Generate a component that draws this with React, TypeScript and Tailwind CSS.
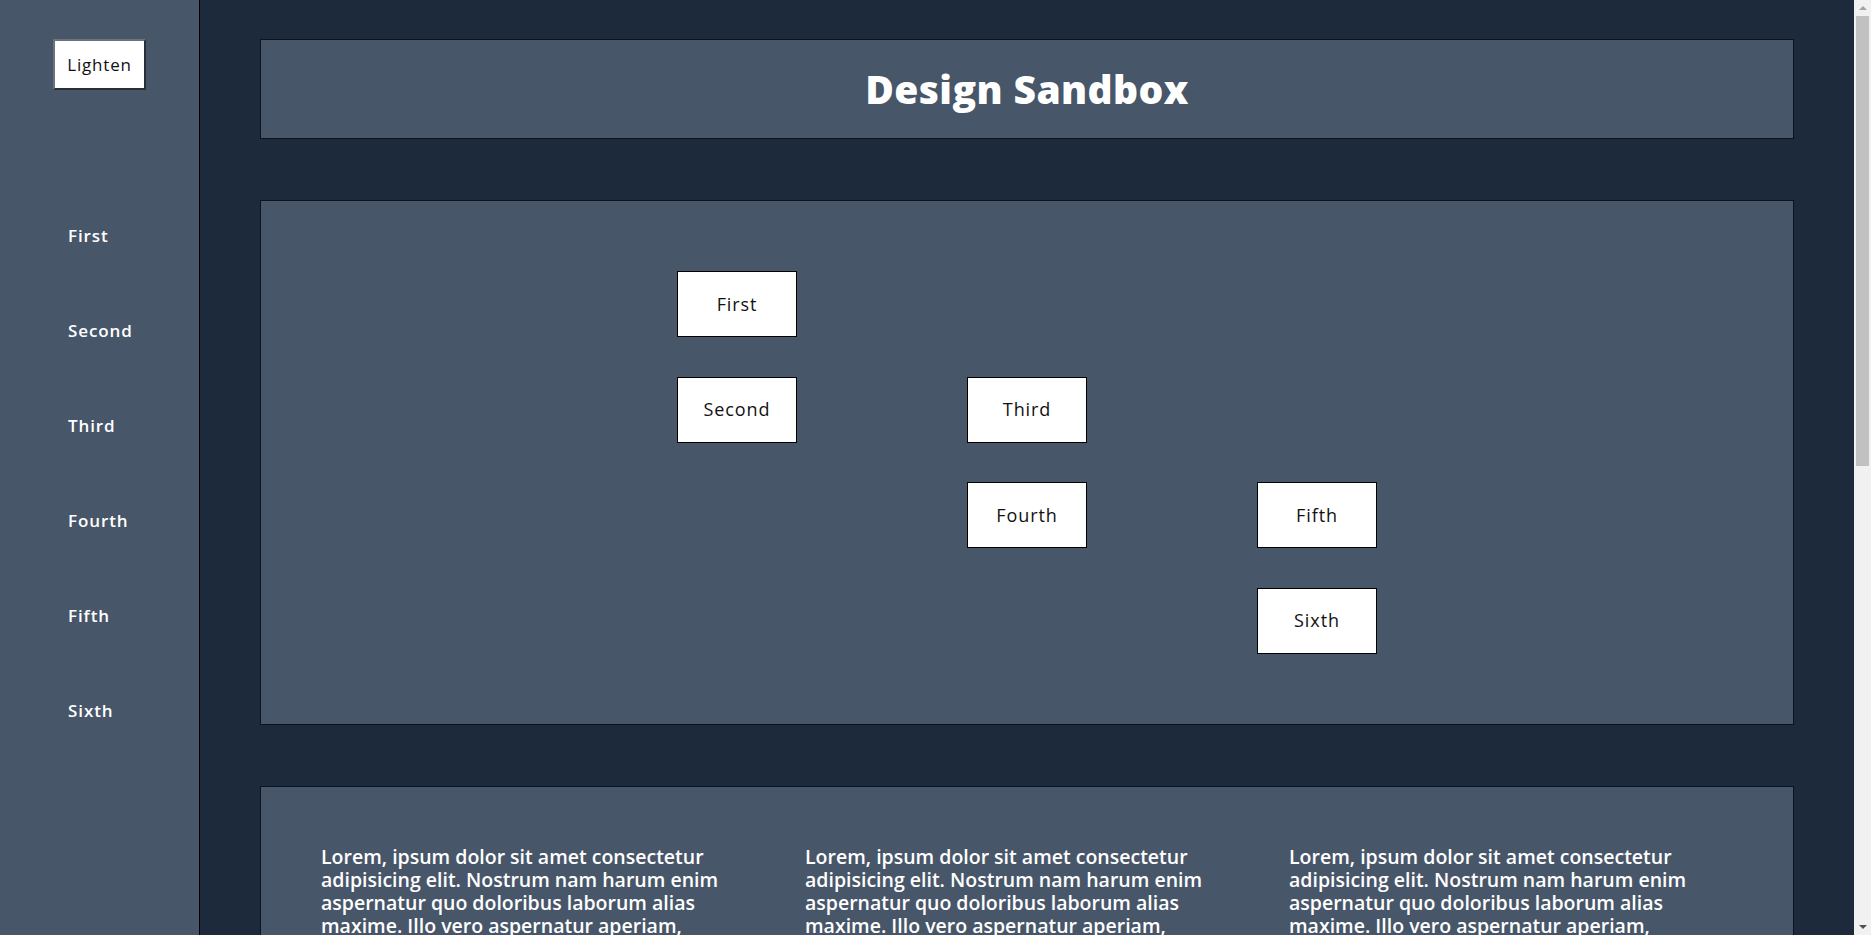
import React from 'react';

const navItems = ['First', 'Second', 'Third', 'Fourth', 'Fifth', 'Sixth'];

const lorem =
  'Lorem, ipsum dolor sit amet consectetur adipisicing elit. Nostrum nam harum enim aspernatur quo doloribus laborum alias maxime. Illo vero aspernatur aperiam, voluptatum quas necessitatibus rerum ex nobis est aut! Quibusdam, perspiciatis.';

const Tile = ({ label, className }: { label: string; className: string }) => (
  <div
    className={`flex items-center justify-center bg-white border border-black text-[18px] tracking-[0.9px] text-[#111] ${className}`}
  >
    {label}
  </div>
);

// stand-in for the browser's vertical scrollbar seen in the screenshot
const Scrollbar = () => (
  <div className="sticky top-0 self-start h-screen w-[17px] shrink-0 bg-[#f1f1f1] flex flex-col items-center">
    <div className="h-[16px] flex items-center justify-center">
      <div className="w-0 h-0 border-l-[4px] border-r-[4px] border-b-[4px] border-l-transparent border-r-transparent border-b-[#a3a3a3]" />
    </div>
    <div className="w-[13px] h-[450px] bg-[#c1c1c1]" />
    <div className="flex-1" />
    <div className="h-[16px] flex items-center justify-center">
      <div className="w-0 h-0 border-l-[4px] border-r-[4px] border-t-[4px] border-l-transparent border-r-transparent border-t-[#505050]" />
    </div>
  </div>
);

const App = () => {
  return (
    <div className="flex min-h-screen bg-[#1c2a3c] font-['Open_Sans',sans-serif]">
      <aside className="w-[200px] shrink-0 bg-[#485669] border-r border-black flex flex-col items-center pt-[39px]">
        <button className="w-[93px] h-[51px] bg-white border-2 border-t-[#6b7280] border-l-[#6b7280] border-r-[#2a2f36] border-b-[#2a2f36] text-[17px] tracking-[0.8px] text-[#111]">
          Lighten
        </button>
        <nav className="self-stretch pl-[68px] pt-[135px] flex flex-col gap-[73px]">
          {navItems.map((item) => (
            <a key={item} href="#" className="text-white font-semibold text-[17px] tracking-[0.9px] leading-[22px]">
              {item}
            </a>
          ))}
        </nav>
      </aside>

      <main className="flex-1 px-[60px] pt-[39px] pb-[60px] flex flex-col gap-[61px]">
        <header className="h-[100px] bg-[#485669] border border-[#0b1320] flex items-center justify-center">
          <h1 className="text-white font-extrabold text-[39px] tracking-[0.4px]">Design Sandbox</h1>
        </header>

        <section className="bg-[#485669] border border-[#0b1320] py-[70px] grid justify-center grid-cols-[repeat(3,120px)] grid-rows-[repeat(4,66px)] gap-x-[170px] gap-y-[39.5px]">
          <Tile label="First" className="col-start-1 row-start-1" />
          <Tile label="Second" className="col-start-1 row-start-2" />
          <Tile label="Third" className="col-start-2 row-start-2" />
          <Tile label="Fourth" className="col-start-2 row-start-3" />
          <Tile label="Fifth" className="col-start-3 row-start-3" />
          <Tile label="Sixth" className="col-start-3 row-start-4" />
        </section>

        <section className="bg-[#485669] border border-[#0b1320] px-[60px] pt-[58px] pb-[60px] grid grid-cols-3 gap-x-[40px]">
          {[0, 1, 2].map((i) => (
            <p key={i} className="text-white font-semibold text-[19.5px] leading-[23px]">
              {lorem}
            </p>
          ))}
        </section>
      </main>

      <Scrollbar />
    </div>
  );
};

export default App;
